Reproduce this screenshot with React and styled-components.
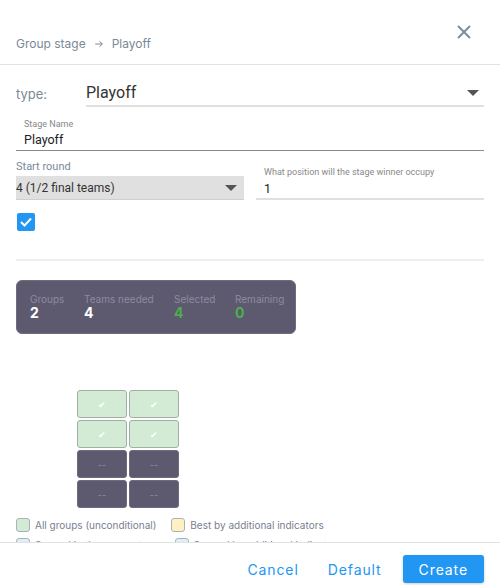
import React from 'react';
import styled, { createGlobalStyle } from 'styled-components';

const GlobalStyle = createGlobalStyle`
    html, body {
        margin: 0;
        padding: 0;
        background: #ffffff;
    }
    body {
        font-family: Inter, "Noto Sans", sans-serif;
    }
`;

const Dialog = styled.div`
    width: 500px;
    height: 585px;
    display: flex;
    flex-direction: column;
    background: #fff;
    overflow: hidden;
`;

const Header = styled.div`
    height: 64px;
    flex-shrink: 0;
    display: flex;
    align-items: flex-start;
    justify-content: space-between;
    padding: 0 16px;
    border-bottom: 1px solid #e2e2e2;
`;

const Crumbs = styled.div`
    margin-top: 36px;
    display: flex;
    align-items: center;
    gap: 8px;
    font-size: 12px;
    color: #7a8998;
`;

const CloseButton = styled.button`
    margin-top: 24px;
    margin-right: 11px;
    width: 18px;
    height: 18px;
    padding: 0;
    border: none;
    background: none;
    color: #78909c;
    cursor: pointer;
`;

const Body = styled.div`
    flex: 1;
    overflow: hidden;
    padding: 15px 16px 0;
`;

const TypeRow = styled.div`
    display: flex;
    align-items: flex-end;
    height: 27px;
`;

const TypeLabel = styled.div`
    width: 70px;
    font-size: 13px;
    color: #7a8998;
    padding-bottom: 5px;
`;

const SelectLine = styled.div`
    flex: 1;
    display: flex;
    align-items: center;
    justify-content: space-between;
    height: ${({ $filled }) => ($filled ? 23 : 25)}px;
    border-bottom: ${({ $filled }) => ($filled ? '1px solid #cfcfcf' : '2px solid #e0e0e0')};
    padding-right: 5px;
    font-family: Roboto, sans-serif;
    font-size: ${({ $size }) => $size || 16}px;
    color: #333;
    background: ${({ $filled }) => ($filled ? '#e0e0e0' : 'transparent')};
`;

const Caret = styled.span`
    width: 0;
    height: 0;
    margin-right: ${({ $gap }) => $gap || 0}px;
    border-left: 6px solid transparent;
    border-right: 6px solid transparent;
    border-top: 6px solid #555;
`;

const TextField = styled.div`
    margin-top: ${({ $top }) => $top || 0}px;
    padding: 0 ${({ $pad }) => $pad || 0}px;
    border-bottom: ${({ $strong }) => ($strong ? '1px solid #8a8a8a' : '2px solid #e0e0e0')};
    font-family: Roboto, sans-serif;
    height: ${({ $height }) => $height}px;
    box-sizing: border-box;
`;

const FieldLabel = styled.div`
    font-size: ${({ $size }) => $size || 9}px;
    color: #888;
    line-height: 1.2;
`;

const FieldValue = styled.div`
    font-size: 12.5px;
    color: #222;
    margin-top: ${({ $top }) => $top || 2}px;
`;

const TwoCols = styled.div`
    margin-top: 9px;
    display: grid;
    grid-template-columns: 228px 1fr;
    column-gap: 12px;
    align-items: end;
`;

const SmallLabel = styled.div`
    font-family: Roboto, sans-serif;
    font-size: 11px;
    color: #7a8998;
    margin-bottom: 3px;
`;

const Check = styled.div`
    margin-top: 13px;
    margin-left: 1px;
    width: 18px;
    height: 18px;
    border-radius: 2px;
    background: #2196f3;
    display: flex;
    align-items: center;
    justify-content: center;
`;

const Divider = styled.div`
    margin-top: 28px;
    height: 2px;
    background: #eeeeee;
`;

const StatsCard = styled.div`
    margin-top: 19px;
    width: 280px;
    height: 54px;
    box-sizing: border-box;
    border-radius: 6px;
    background: #5d5a6f;
    border: 1px solid #6e6b80;
    display: flex;
    padding: 12px 0 0 13px;
`;

const Stat = styled.div`
    width: ${({ $w }) => $w}px;
    display: flex;
    flex-direction: column;
`;

const StatLabel = styled.span`
    font-size: 10px;
    color: #8d8aa0;
    line-height: 12px;
`;

const StatValue = styled.span`
    font-size: 14px;
    font-weight: 700;
    line-height: 16px;
    color: ${({ $green }) => ($green ? '#4caf50' : '#ffffff')};
`;

const Grid = styled.div`
    margin-top: 56px;
    margin-left: 61px;
    display: grid;
    grid-template-columns: repeat(2, 50px);
    grid-auto-rows: 28px;
    gap: 2px;
`;

const Cell = styled.div`
    border-radius: 3px;
    box-sizing: border-box;
    display: flex;
    align-items: center;
    justify-content: center;
    font-size: 9px;
    background: ${({ $done }) => ($done ? '#d3ebd4' : '#5d5a6f')};
    border: 1px solid ${({ $done }) => ($done ? '#9fb1a4' : '#6e6b80')};
    color: ${({ $done }) => ($done ? '#ffffff' : '#8d8aa0')};
`;

const Legend = styled.div`
    margin-top: 10px;
    display: flex;
    flex-direction: column;
    gap: 6px;
`;

const LegendRow = styled.div`
    display: flex;
    gap: 15px;
`;

const LegendItem = styled.div`
    display: flex;
    align-items: center;
    gap: 5px;
    font-size: 10px;
    color: #7a8090;
`;

const Swatch = styled.span`
    width: 12px;
    height: 12px;
    border-radius: 3px;
    background: ${({ $color }) => $color};
    border: 1px solid #a9b2b8;
`;

const Footer = styled.div`
    height: 43px;
    box-sizing: border-box;
    flex-shrink: 0;
    border-top: 1px solid #e2e2e2;
    display: flex;
    align-items: flex-start;
    justify-content: flex-end;
    gap: 13px;
    padding: 12px 16px 0 0;
`;

const FooterButton = styled.button`
    border: none;
    border-radius: 3px;
    height: 28px;
    padding: 0 ${({ $primary }) => ($primary ? 16 : 8)}px;
    font-family: Inter, sans-serif;
    font-size: 14px;
    letter-spacing: 0.9px;
    color: ${({ $primary }) => ($primary ? '#ffffff' : '#2196f3')};
    background: ${({ $primary }) => ($primary ? '#2196f3' : 'transparent')};
    box-shadow: ${({ $primary }) => ($primary ? '0 1px 3px rgba(0,0,0,0.2)' : 'none')};
    cursor: pointer;
`;

const stats = [
    { label: 'Groups', value: '2', w: 54 },
    { label: 'Teams needed', value: '4', w: 90 },
    { label: 'Selected', value: '4', w: 61, green: true },
    { label: 'Remaining', value: '0', w: 60, green: true },
];

const cells = [true, true, true, true, false, false, false, false];

const App = () => {
    return (
        <>
            <GlobalStyle />
            <Dialog>
                <Header>
                    <Crumbs>
                        <span>Group stage</span>
                        <svg width="10" height="10" viewBox="0 0 24 24" fill="none" stroke="#7a8998" strokeWidth="2.4">
                            <path d="M3 12h17M13 5l7 7-7 7" />
                        </svg>
                        <span>Playoff</span>
                    </Crumbs>
                    <CloseButton aria-label="close">
                        <svg width="14" height="14" viewBox="0 0 14 14" stroke="currentColor" strokeWidth="2">
                            <path d="M1 1l12 12M13 1L1 13" />
                        </svg>
                    </CloseButton>
                </Header>

                <Body>
                    <TypeRow>
                        <TypeLabel>type:</TypeLabel>
                        <SelectLine>
                            <span>Playoff</span>
                            <Caret />
                        </SelectLine>
                    </TypeRow>

                    <TextField $top={12} $pad={8} $height={32} $strong>
                        <FieldLabel>Stage Name</FieldLabel>
                        <FieldValue>Playoff</FieldValue>
                    </TextField>

                    <TwoCols>
                        <div>
                            <SmallLabel>Start round</SmallLabel>
                            <SelectLine $filled $size={12}>
                                <span>4 (1/2 final teams)</span>
                                <Caret $gap={2} />
                            </SelectLine>
                        </div>
                        <TextField $pad={8} $height={33}>
                            <FieldLabel $size={9}>What position will the stage winner occupy</FieldLabel>
                            <FieldValue $top={3}>1</FieldValue>
                        </TextField>
                    </TwoCols>

                    <Check>
                        <svg width="12" height="10" viewBox="0 0 12 10" fill="none" stroke="#fff" strokeWidth="2">
                            <path d="M1 5l3.5 3.5L11 1.5" />
                        </svg>
                    </Check>

                    <Divider />

                    <StatsCard>
                        {stats.map((s) => (
                            <Stat key={s.label} $w={s.w}>
                                <StatLabel>{s.label}</StatLabel>
                                <StatValue $green={s.green}>{s.value}</StatValue>
                            </Stat>
                        ))}
                    </StatsCard>

                    <Grid>
                        {cells.map((done, i) => (
                            <Cell key={i} $done={done}>
                                {done ? '✔' : '--'}
                            </Cell>
                        ))}
                    </Grid>

                    <Legend>
                        <LegendRow>
                            <LegendItem>
                                <Swatch $color="#d3ebd4" />
                                All groups (unconditional)
                            </LegendItem>
                            <LegendItem>
                                <Swatch $color="#fff0c2" />
                                Best by additional indicators
                            </LegendItem>
                        </LegendRow>
                        <LegendRow>
                            <LegendItem>
                                <Swatch $color="#deeefb" />
                                Second in the group stage
                            </LegendItem>
                            <LegendItem>
                                <Swatch $color="#deeefb" />
                                Second by additional indicators
                            </LegendItem>
                        </LegendRow>
                    </Legend>
                </Body>

                <Footer>
                    <FooterButton>Cancel</FooterButton>
                    <FooterButton>Default</FooterButton>
                    <FooterButton $primary>Create</FooterButton>
                </Footer>
            </Dialog>
        </>
    );
};

export default App;
